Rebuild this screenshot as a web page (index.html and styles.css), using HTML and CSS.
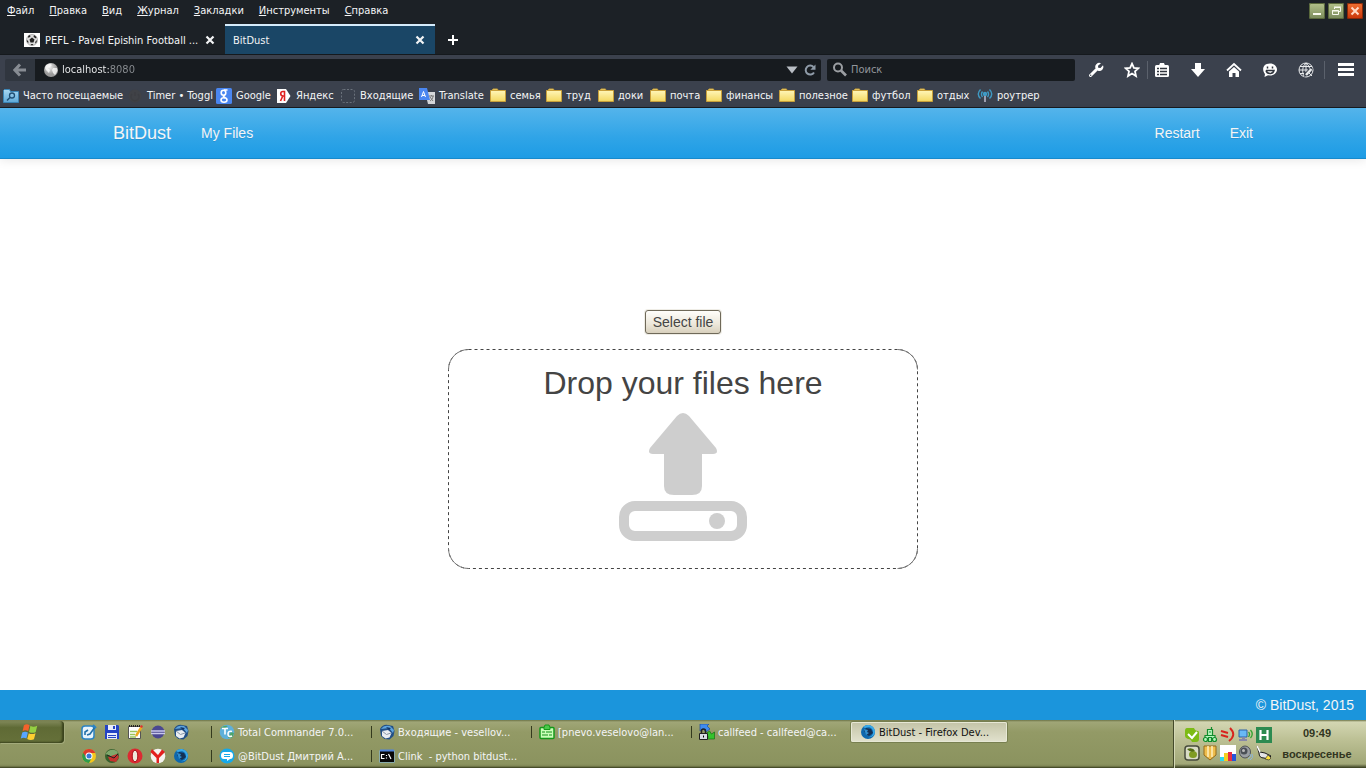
FILE: index.html
```html
<!DOCTYPE html>
<html lang="ru">
<head>
<meta charset="utf-8">
<title>BitDust</title>
<link rel="stylesheet" href="styles.css">
</head>
<body>
<svg class="defs" aria-hidden="true">
  <defs>
    <linearGradient id="g-folder" x2="0" y2="1"><stop offset="0" stop-color="#fff6b8"/><stop offset="1" stop-color="#f3d860"/></linearGradient>
    <linearGradient id="g-blue" x2="0" y2="1"><stop offset="0" stop-color="#a9d8f3"/><stop offset="1" stop-color="#5ea9d8"/></linearGradient>
    <radialGradient id="g-globe" cx=".4" cy=".3"><stop offset="0" stop-color="#eee"/><stop offset="1" stop-color="#999"/></radialGradient>
    <symbol id="folder" viewBox="0 0 16 16"><path d="M1 4V2.500h1L3 1h4.500l.5 1.500V4z" fill="#f6dc7a" stroke="#c9a03a"/><path d="M.5 2.500h15v11H.5z" fill="url(#g-folder)" stroke="#c9a03a"/></symbol>
    <symbol id="close" viewBox="0 0 10 10"><path d="M1.500 1.500l7 7M8.500 1.500l-7 7" stroke="#f2f4f5" stroke-width="2.200"/></symbol>
    <symbol id="thunderbird" viewBox="0 0 16 16"><path d="M1 5Q4 0 9 1l5 1 1.500 5-1 5-4 3.500-5-.5-3.500-3z" fill="#214f86"/><path d="M2 5Q5 .5 11 2l4 4-1 3-4-5z" fill="#5fa4dc"/><path d="M3 7l6-1 3.500 3-2 4.500-4 1L3 12z" fill="#e9eef2"/><path d="M3 7l4.500 3.500L12 9" fill="none" stroke="#8a98a8"/><path d="M7 3l5 1-2 2z" fill="#123466"/></symbol>
    <symbol id="firefox" viewBox="0 0 16 16"><circle cx="8" cy="8" r="7" fill="#0d67ad"/><path d="M3 3l2 1c4-2 8 0 8 4s-3 5-5 5c4 1 7-2 7-6C14 1 7-1 3 3z" fill="#3aa9e8"/><path d="M6 4l5 1 2 4-4 3-3-2-2-3z" fill="#143155"/><path d="M4 5l4 1-1 2 2 1-3 2z" fill="#2f8fd0"/></symbol>
    <symbol id="putty" viewBox="0 0 16 16"><path d="M1 0h9L8 2l3 3-4 3-3-3-3 2z" fill="#3f8cf0" stroke="#1d4c9c" stroke-width=".7"/><path d="M15.500 15h-8l2-2-3-3 4-3 2 3 3-2z" fill="#35c32d" stroke="#167012" stroke-width=".7"/><path d="M2.500 10V7a2 2 0 014 0v3" fill="none" stroke="#222" stroke-width="1.500"/><path d="M.5 9.500h8v6h-8z" fill="#d8dce4" stroke="#222"/><path d="M4 11.500h1v2H4z"/></symbol>
  </defs>
</svg>

<header class="browser">
  <div class="menubar">
    <nav class="menus" aria-label="Меню">
      <button type="button"><u>Ф</u>айл</button>
      <button type="button"><u>П</u>равка</button>
      <button type="button"><u>В</u>ид</button>
      <button type="button"><u>Ж</u>урнал</button>
      <button type="button"><u>З</u>акладки</button>
      <button type="button"><u>И</u>нструменты</button>
      <button type="button"><u>С</u>правка</button>
    </nav>
    <div class="winctl">
      <button type="button" class="win" aria-label="Свернуть"><svg viewBox="0 0 16 16"><path d="M4 11h8" stroke="#f8faee" stroke-width="2"/></svg></button>
      <button type="button" class="win" aria-label="Восстановить"><svg viewBox="0 0 16 16" fill="none" stroke="#f8faee"><path d="M6.500 6V4.500h6v4H11M6 4h7M4.500 7.500h6v4h-6zM4 8h7"/></svg></button>
      <button type="button" class="win win-close" aria-label="Закрыть"><svg viewBox="0 0 16 16"><path d="M4.500 4.500l7 7M11.500 4.500l-7 7" stroke="#ffd9c4" stroke-width="2"/></svg></button>
    </div>
  </div>

  <div class="tabs">
    <div class="tab">
      <svg class="i16" viewBox="0 0 16 16"><path d="M0 1h16v14H0z" fill="#fff"/><circle cx="8" cy="8" r="5.500" fill="#ddd" stroke="#888" stroke-width=".6"/><path d="M8 5.500l2.500 2-1 3h-3l-1-3zM4 4l2-1 .5 1.500L4.500 6zM10 3l2.500 2-.5 1.500L9.500 5zM2.800 8l1.400 1 .3 2L3 10zM13 8l-1.500 1.500-.5 2 1.500-1zM6.500 12h3L8 13.500z" fill="#222"/></svg>
      <span class="tab-title">PEFL - Pavel Epishin Football ...</span>
      <button type="button" aria-label="Закрыть вкладку"><svg><use href="#close"/></svg></button>
    </div>
    <div class="tab tab-on">
      <span class="tab-title">BitDust</span>
      <button type="button" aria-label="Закрыть вкладку"><svg><use href="#close"/></svg></button>
    </div>
    <button type="button" class="newtab" aria-label="Новая вкладка"><svg viewBox="0 0 12 12"><path d="M6 1v10M1 6h10" stroke="#fff" stroke-width="2"/></svg></button>
  </div>

  <div class="toolbar">
    <button type="button" class="back" aria-label="Назад"><svg viewBox="0 0 14 14"><path d="M7 1.500L1.800 7 7 12.500M2 7h11" fill="none" stroke="#878c93" stroke-width="3"/></svg></button>
    <div class="urlbar">
      <svg class="i16" viewBox="0 0 16 16"><circle cx="8" cy="8" r="7" fill="url(#g-globe)"/><path d="M3 3l4-1.500L9 3 7 5 5 6l2 2-1 3-3-3-1-2zM10 6l4 0 .5 3-2.500 4-2-2-1-3z" fill="#fff" opacity=".75"/></svg>
      <input class="url" aria-label="Адрес" value="localhost:8080">
      <button type="button" class="bare" aria-label="История"><svg class="drop-arrow" viewBox="0 0 12 8"><path d="M.5.500h11L6 7.500z" fill="#b9bec4"/></svg></button>
      <button type="button" class="bare" aria-label="Обновить"><svg class="reload" viewBox="0 0 12 12"><path d="M9.500 3A4.500 4.500 0 1 0 10 8.500" fill="none" stroke="#8f9ba8" stroke-width="2"/><path d="M11.500.5v5.200H6.300z" fill="#8f9ba8"/></svg></button>
    </div>
    <div class="searchbar">
      <svg class="i16" viewBox="0 0 16 16" fill="none" stroke="#9b9ea2"><circle cx="6" cy="5.500" r="4" stroke-width="2"/><path d="M9 8.500l5 5" stroke-width="2.600"/></svg>
      <input type="search" aria-label="Поиск" placeholder="Поиск">
    </div>
    <div class="tools">
      <button type="button" aria-label="Разработка" class="t-wrench"><svg viewBox="0 0 16 16"><path d="M2.500 13.500l6-6" stroke="#fff" stroke-width="3" stroke-linecap="round"/><path d="M13 1.300a4 4 0 00-5.500 5L10 8.700a4 4 0 005-5.400L12.500 6l-2.300-.2L10 3.700z" fill="#fff"/><circle cx="2.700" cy="13.300" r=".7" fill="#3b414c"/></svg></button>
      <button type="button" aria-label="В закладки" class="t-star"><svg viewBox="0 0 16 16"><path d="M8 1.700l1.900 4.200 4.500.4L11 9.400l1 4.700-4-2.500-4 2.500 1-4.700L1.600 6.300l4.500-.4z" fill="none" stroke="#fff" stroke-width="1.800"/></svg></button>
      <button type="button" aria-label="Библиотека" class="t-lib"><svg viewBox="0 0 16 16"><rect x="1" y="3" width="14" height="12" rx="1.500" fill="#fff"/><path d="M5 3.500L6 1h4l1 2.500z" fill="#fff"/><path d="M3 6.500h2M6 6.500h7M3 9.500h2M6 9.500h7M3 12.500h2M6 12.500h7" stroke="#30353e" stroke-width="1.300"/></svg></button>
      <button type="button" aria-label="Загрузки"><svg viewBox="0 0 16 16"><path d="M5 1h6v6h4l-7 8-7-8h4z" fill="#fff"/></svg></button>
      <button type="button" aria-label="Домой"><svg viewBox="0 0 16 16"><path d="M1 8.500L8 2l7 6.500" fill="none" stroke="#fff" stroke-width="1.800"/><path d="M3 9.500L8 5l5 4.500V15H9.500v-4h-3v4H3z" fill="#fff"/></svg></button>
      <button type="button" aria-label="Чат"><svg viewBox="0 0 16 16"><path d="M8 1.500c4 0 7 2.700 7 6s-3 6-7 6l-2-.2L2.500 15l.5-3C0 9 0 1.500 8 1.500z" fill="#fff"/><path d="M4 8.500h8c-1 4-7 4-8 0M5.500 4.500v2M10.500 4.500v2" fill="none" stroke="#30353e" stroke-width="1.500"/></svg></button>
      <button type="button" aria-label="Дополнение"><svg viewBox="0 0 16 16" fill="none" stroke="#e8eaec"><circle cx="8" cy="8" r="7"/><path d="M8 1v9M1 8h9M2 4.500h12M2 11.500h4M8 1C4 4 4 11 6 14M8 1c3 2 4 5 3.500 8"/><path d="M6 15l2-5 5-5 2 2-5 6z" fill="#3b414c" stroke="none"/><path d="M8 13l5.500-6" stroke-width="2.500"/><path d="M11 11l3 3"/></svg></button>
      <button type="button" aria-label="Меню" class="t-menu"><svg viewBox="0 0 16 16"><path d="M0 2.500h16M0 7.500h16M0 12.500h16" stroke="#fff" stroke-width="3"/></svg></button>
    </div>
  </div>

  <nav class="bookmarks" aria-label="Закладки">
    <a href="#" class="bm-often"><svg class="i16" viewBox="0 0 16 16"><path d="M.5 14.500v-12l1-1h5l1 2h8v11z" fill="url(#g-blue)" stroke="#3b86b8"/><circle cx="9" cy="7.500" r="2.500" fill="none" stroke="#1f4e74" stroke-width="1.300"/><path d="M7 9.500l-3 3" stroke="#1f4e74" stroke-width="1.500"/></svg>Часто посещаемые</a>
    <a href="#" class="bm-toggl"><svg class="i16" viewBox="0 0 16 16"><circle cx="8" cy="8" r="6.500" fill="#404247"/><path d="M5 6a4 4 0 106 0M8 4v4" fill="none" stroke="#3c3e43" stroke-width="1.500"/></svg>Timer • Toggl</a>
    <a href="#" class="bm-google"><svg class="i16" viewBox="0 0 16 16"><rect width="16" height="16" rx="1.500" fill="#4a86f0"/><g fill="none" stroke="#fff" stroke-width="1.600"><ellipse cx="7.500" cy="4.800" rx="2.300" ry="2.500"/><ellipse cx="8" cy="12" rx="3" ry="2.200"/><path d="M8 2h3.500M9 7c-3 1-1 2 .5 3"/></g></svg>Google</a>
    <a href="#" class="bm-yandex"><svg class="i16" viewBox="0 0 16 16"><path d="M1 1h9l4.500 7L10 15H1z" fill="#fff"/><path d="M8.500 13V3.500H7C4 3.500 4 8 7 8h1.500M6.800 8L4.500 13" fill="none" stroke="#e02020" stroke-width="1.600"/></svg>Яндекс</a>
    <a href="#" class="bm-inbox"><svg class="i16" viewBox="0 0 16 16"><rect x="1.500" y="1.500" width="13" height="13" rx="2" fill="none" stroke="#6b727c" stroke-dasharray="2 1.500"/></svg>Входящие</a>
    <a href="#" class="bm-tr"><svg class="i16" viewBox="0 0 16 16"><path d="M6 4h10v12H9z" fill="#d5d7da"/><path d="M0 0h8l3 12H0z" fill="#4a86f0"/><path d="M2.500 9L4.500 3.500 6.500 9M3 7.500h3" fill="none" stroke="#fff"/><path d="M10 8h5M12.500 7v1M14 8c0 3-2 4-3 5M11 9l3 4" fill="none" stroke="#777"/></svg>Translate</a>
    <a href="#" class="bm-w1"><svg class="i16"><use href="#folder"/></svg>семья</a>
    <a href="#" class="bm-w2"><svg class="i16"><use href="#folder"/></svg>труд</a>
    <a href="#" class="bm-w2"><svg class="i16"><use href="#folder"/></svg>доки</a>
    <a href="#" class="bm-w1"><svg class="i16"><use href="#folder"/></svg>почта</a>
    <a href="#" class="bm-w3"><svg class="i16"><use href="#folder"/></svg>финансы</a>
    <a href="#" class="bm-w3"><svg class="i16"><use href="#folder"/></svg>полезное</a>
    <a href="#" class="bm-w4"><svg class="i16"><use href="#folder"/></svg>футбол</a>
    <a href="#" class="bm-w5"><svg class="i16"><use href="#folder"/></svg>отдых</a>
    <a href="#"><svg class="i16" viewBox="0 0 16 16" fill="none" stroke="#3f9ac4" stroke-width="1.400"><path d="M3.500 1.500c-3 3-3 6 0 9M12.500 1.500c3 3 3 6 0 9M5.500 3.500c-1.500 2-1.500 3.500 0 5.500M10.500 3.500c1.500 2 1.500 3.500 0 5.500"/><circle cx="8" cy="6" r="1.500" fill="#3f9ac4"/><path d="M8 8v6" stroke="#aab" stroke-width="1.800"/></svg>роутрер</a>
  </nav>
</header>

<div class="page">
  <nav class="navbar">
    <div class="container">
      <a class="brand" href="#">BitDust</a>
      <a href="#">My Files</a>
      <a class="push" href="#">Restart</a>
      <a href="#">Exit</a>
    </div>
  </nav>
  <main class="content">
    <button type="button" class="select-file">Select file</button>
    <section class="dropzone">
      <svg class="frame" aria-hidden="true">
        <rect class="frame-line" x="0.500" y="0.500" rx="20"/>
        <g class="frame-corners">
          <path d="M.5 20.500a20 20 0 0120-20"/>
          <svg x="100%" overflow="visible"><path d="M-20.500.500a20 20 0 0120 20"/></svg>
          <svg y="100%" overflow="visible"><path d="M.5-20.500a20 20 0 0020 20"/></svg>
          <svg x="100%" y="100%" overflow="visible"><path d="M-.5-20.500a20 20 0 01-20 20"/></svg>
        </g>
      </svg>
      <h1>Drop your files here</h1>
      <svg class="upload" viewBox="0 0 128 128" fill="#cecece"><path d="M58 3q6-6 12 0l27 32q3 6-3 6H83v32q0 9-10 9H55q-10 0-10-9V41H34q-6 0-3-6z"/><rect x="5" y="93" width="118" height="30" rx="11" fill="none" stroke="#cecece" stroke-width="10"/><circle cx="98" cy="108" r="8"/></svg>
    </section>
  </main>
  <footer class="footer">© BitDust, 2015</footer>
</div>

<div class="taskbar">
  <button type="button" class="start" aria-label="Пуск"><svg viewBox="0 0 16 16"><path d="M3.500 2q2.500-2 5 0L7.300 7.300q-2.500-1.500-5 0z" fill="#f4622c"/><path d="M9.300 2.500q2.500 1.500 6 0L14 8q-2.500 1.500-6 0z" fill="#95d042"/><path d="M2 8.500q2.500-1.500 5 0l-1.300 5.300q-2.500-1.500-5 0z" fill="#58a6ff"/><path d="M7.800 9q2.500 1.500 6 0l-1.400 5.500q-3 1.500-6-.2z" fill="#ffcf30"/></svg></button>
  <div class="quick">
    <button type="button" aria-label="Рабочий стол"><svg viewBox="0 0 16 16"><rect x="1" y="2" width="12" height="13" rx="3" fill="#e8f3fb" stroke="#2b83c4" stroke-width="1.500"/><path d="M4 11V8l3-2M6 11l3-1 5-7" fill="none" stroke="#236fa8" stroke-width="1.600"/><path d="M12 1l3 3" stroke="#2b83c4" stroke-width="2"/></svg></button>
    <button type="button" aria-label="Сохранить"><svg viewBox="0 0 16 16"><path d="M1 1h13l1 1v13H1z" fill="#2444c4"/><path d="M4 1h8v5H4zM3 9h10v6H3z" fill="#e8ecf8"/><path d="M9 2h2v3H9zM4 11h8v1H4zM4 13h8v1H4z" fill="#2444c4"/></svg></button>
    <button type="button" aria-label="Блокнот"><svg viewBox="0 0 16 16"><path d="M1.500 2.500h12v12h-12z" fill="#fff" stroke="#555"/><path d="M3 7.500h7M3 10.500h5M3 13h6" stroke="#9bc45a" stroke-width="1.500"/><path d="M2 2h11" stroke="#222" stroke-dasharray="1 1" stroke-width="2"/><path d="M14.500 3L9 12" stroke="#edaa20" stroke-width="2.500"/><path d="M14 1l2 1-1 2-2-1z" fill="#d33"/></svg></button>
    <button type="button" aria-label="Eclipse"><svg viewBox="0 0 16 16"><circle cx="8" cy="8" r="6.500" fill="#4b4890"/><path d="M1 7h14M1 9.500h14" stroke="#c9c8ec" stroke-width="1.300"/></svg></button>
    <button type="button" aria-label="Thunderbird"><svg><use href="#thunderbird"/></svg></button>
    <button type="button" aria-label="Chrome"><svg viewBox="0 0 16 16"><circle cx="8" cy="8" r="7" fill="#f4c71c"/><path d="M2 4.500A7 7 0 008 15l3-5.500z" fill="#2f9b4c"/><path d="M2 4.500A7 7 0 0114.300 5H8L5 9z" fill="#dc3b2d"/><circle cx="8" cy="8" r="3.500" fill="#fff"/><circle cx="8" cy="8" r="2.500" fill="#3b78d8"/></svg></button>
    <button type="button" aria-label="Почта"><svg viewBox="0 0 16 16"><circle cx="8" cy="8" r="7" fill="#35602c"/><path d="M1.500 6C4 1 12 0 14 5l-5 4z" fill="#7fa86c"/><path d="M4 9l9-3 2 3-3 5-6-1z" fill="#c4332e"/><path d="M3 7l7 3 4-4" fill="none" stroke="#222"/></svg></button>
    <button type="button" aria-label="Opera"><svg viewBox="0 0 16 16"><ellipse cx="8" cy="8" rx="7.500" ry="7.500" fill="#dc2b32"/><ellipse cx="8" cy="8" rx="2.800" ry="5.800" fill="#efe9dc" stroke="#a80d17"/></svg></button>
    <button type="button" aria-label="Яндекс"><svg viewBox="0 0 16 16"><circle cx="8" cy="8" r="7.300" fill="#f5f3f0"/><path d="M2 1l6 6 4-5.500L15 4l-6 6v5H6.500v-5L.500 4z" fill="#e3201f"/></svg></button>
    <button type="button" aria-label="Firefox"><svg><use href="#firefox"/></svg></button>
  </div>
  <div class="tasks">
    <button type="button" class="task"><svg viewBox="0 0 16 16"><circle cx="8" cy="8" r="7.300" fill="#5fb0da"/><path d="M9 14l3-6 3 1-2 5zM2 4q3-3 7-2L6 4z" fill="#4da46b"/><path d="M3 4.500h6M6 4.500v6M13 7.500q-4-1-4 2.500t4 2" fill="none" stroke="#fff" stroke-width="1.600"/></svg><span>Total Commander 7.0...</span></button>
    <button type="button" class="task"><svg><use href="#thunderbird"/></svg><span>Входящие - vesellov...</span></button>
    <button type="button" class="task"><svg viewBox="0 0 16 16"><rect x="1" y="3.500" width="14" height="11" rx="1" fill="#caffb8" stroke="#14991a" stroke-width="1.500"/><path d="M5 3.500L6 1h4l1 2.500v2H5z" fill="#4cc94a" stroke="#14991a"/><path d="M3 8h3M7 8h6M3 11h6M10 11h3" stroke="#129018" stroke-width="1.200"/></svg><span>[pnevo.veselovo@lan...</span></button>
    <button type="button" class="task"><svg><use href="#putty"/></svg><span>callfeed - callfeed@ca...</span></button>
    <button type="button" class="task task-on"><svg><use href="#firefox"/></svg><span>BitDust - Firefox Dev...</span></button>
    <button type="button" class="task row2"><svg viewBox="0 0 16 16"><circle cx="8" cy="8" r="7.500" fill="#16a9ea"/><path d="M5 4h6q3 0 3 3.500T11 11l-3 2v-2H5Q2 11 2 7.500T5 4z" fill="#fff"/><path d="M5 6.500h6M5 8.500h6" stroke="#16a9ea"/></svg><span>@BitDust Дмитрий А...</span></button>
    <button type="button" class="task"><svg viewBox="0 0 16 16"><path d="M.5 2.500h15v12H.5z" fill="#080808" stroke="#8aa"/><path d="M1 1.500h14v2H1z" fill="#4e83d8"/><path d="M5.500 6.500h-3v4h3M7.500 7v1M7.500 9.500v1M9.500 6l2.500 5" fill="none" stroke="#fff" stroke-width="1.200"/></svg><span>Clink &nbsp;- python bitdust...</span></button>
  </div>
  <div class="tray">
    <div class="tray-icons">
      <svg viewBox="0 0 16 16"><path d="M3 1h7q1 3 4 3 1 0 1 2v6q0 3-3 3H8q-1-3-4-3Q1 11 1 9V4q0-3 2-3z" fill="#7dbb16"/><path d="M4 7l4 4 5-6" fill="none" stroke="#fff" stroke-width="2"/></svg>
      <svg viewBox="0 0 16 16" fill="#b8f5be" stroke="#128c2c" stroke-width="1.200"><path d="M9.500 0v2M5.500 2.500h5v6h-5zM3 8.500h10v3H3z"/><circle cx="3.500" cy="12.500" r="2"/><circle cx="12.500" cy="12.500" r="2"/><path d="M6.500 10.500h3v4h-3zM7 5h2"/></svg>
      <svg viewBox="0 0 16 16" fill="none" stroke="#d8241d" stroke-width="2"><path d="M1 4l7 2M1 8l7 2M10 1q7 7-1 13"/></svg>
      <svg viewBox="0 0 16 16"><path d="M1 3h8v7H1z" fill="#69b9f5" stroke="#2c62a8"/><path d="M4 10h3v2h2v2H1v-2h3z" fill="#88a"/><path d="M10.500 5q2 2 0 5M12.500 3q3.500 4 0 8" fill="none" stroke="#31a330" stroke-width="1.300"/></svg>
      <svg viewBox="0 0 16 16"><path d="M0 0h16v16H0z" fill="#2c8a50"/><path d="M4.500 3v10M11.500 3v10M5 8h6" stroke="#fff" stroke-width="2.200"/></svg>
      <svg viewBox="0 0 16 16"><rect x="1" y="1" width="14" height="14" rx="3" fill="#d9dcc5" stroke="#474b3c" stroke-width="1.500"/><ellipse cx="9" cy="9.500" rx="4" ry="3.500" fill="#809c22"/><path d="M3 4q6-2 8 2-5 2-8-2" fill="#526c14"/></svg>
      <svg viewBox="0 0 16 16"><path d="M2 1h12v9l-6 5-6-5z" fill="#efbd4c" stroke="#946a1b"/><path d="M6 1v11M10 1v11" stroke="#fff0bd" stroke-width="1.500"/></svg>
      <svg viewBox="0 0 16 16"><path d="M0 0h16v16H0z" fill="#fff"/><path d="M0 12h4v4H0z" fill="#2cd8ef"/><path d="M4 8h4v8H4z" fill="#f4cf21"/><path d="M8 7h4v9H8z" fill="#e72f43"/><path d="M12 9h4v7h-4z" fill="#2854d8"/></svg>
      <svg viewBox="0 0 16 16"><ellipse cx="7" cy="7" rx="5.500" ry="6" fill="#9b9fa3" stroke="#505458"/><circle cx="6" cy="6" r="3.500" fill="#4b5056"/><circle cx="5.500" cy="5.500" r="1.500" fill="#bbb"/><path d="M12 9q2 3-2 5M14 9q2 4-2 6" fill="none" stroke="#8db4dc"/></svg>
      <svg viewBox="0 0 16 16"><path d="M1 1l2 7q0 5 5 5l4 1 3-3-6-3-5-1z" fill="#e4e4e4" stroke="#181818"/><path d="M1 1l3 6" stroke="#fff" stroke-width="1.500"/><path d="M12 10l3 3-2 2-4-1z" fill="#ffe33d" stroke="#222" stroke-width=".6"/></svg>
    </div>
    <div class="clock"><time>09:49</time><span>воскресенье</span></div>
  </div>
</div>
</body>
</html>
```
FILE: styles.css
```css
* { box-sizing: border-box; }

body {
  margin: 0;
  min-height: 100vh;
  display: flex;
  flex-direction: column;
  font: 11px/16px "Tahoma", "DejaVu Sans Condensed", "Noto Sans", sans-serif;
  color: #f4f5f6;
  background: #fff;
}

button, input { font: inherit; color: inherit; }
button { margin: 0; padding: 0; border: 0; background: none; }
a { color: inherit; text-decoration: none; }
svg { display: block; flex: none; }
.defs { width: 0; height: 0; position: absolute; }
.i16 { width: 16px; height: 16px; }

/* Browser window */
.browser { background: #1c2126; }

.menubar { display: flex; justify-content: space-between; height: 24px; padding: 2px 3px 0 7px; }
.menus { display: flex; align-items: flex-start; gap: 15px; }
.menus button { line-height: 18px; white-space: nowrap; }
.winctl { display: flex; gap: 3px; padding-top: 1px; }
.win { width: 16px; height: 16px; border-radius: 2px; background: linear-gradient(#b4c28b, #78895a); box-shadow: inset 0 0 0 1px #59683b; }
.win svg { width: 16px; height: 16px; }
.win-close { background: linear-gradient(#ef7133, #c93407); box-shadow: inset 0 0 0 1px #8a2807; }

.tabs { display: flex; height: 31px; padding-left: 16px; border-bottom: 1px solid #15191d; }
.tab { display: flex; align-items: center; gap: 5px; flex: 0 0 209px; min-width: 0; padding: 2px 10px 0 8px; }
.tab-on { flex-basis: 210px; border-top: 2px solid #d5ecfb; background: #1a4666; padding-top: 0; }
.tab-title { flex: 1; min-width: 0; line-height: 18px; padding-top: 2px; white-space: nowrap; overflow: hidden; }
.tab svg:not(.i16) { width: 10px; height: 10px; }
.newtab { width: 36px; display: grid; place-items: center; padding-top: 2px; }
.newtab svg { width: 12px; height: 12px; }

.toolbar { display: flex; align-items: center; height: 29px; padding: 0 5px; background: #3b414d; }
.back { width: 30px; height: 22px; display: grid; place-items: center; background: #30363f; border-radius: 2px 0 0 2px; }
.back svg { width: 14px; height: 14px; }
.urlbar, .searchbar { display: flex; align-items: center; height: 22px; background: #171b1f; border-radius: 0 2px 2px 0; }
.urlbar { flex: 1; gap: 6px; padding: 0 5px 0 8px; margin-right: 6px; }
.urlbar input, .searchbar input { flex: 1; min-width: 0; padding: 0; border: 0; outline: 0; background: none; appearance: none; }
.urlbar .url {
  margin-left: -3px;
  color: transparent;
  background: linear-gradient(to right, #f4f5f6 47px, #8b8f93 47px);
  background-clip: text;
}
.drop-arrow { width: 12px; height: 8px; }
.reload { width: 12px; height: 12px; }
.searchbar { flex: 0 0 248px; gap: 3px; padding: 0 5px; border-radius: 2px; }
.searchbar input::placeholder { color: #92969b; opacity: 1; }
.tools { display: flex; align-items: center; gap: 20px; padding: 0 7px 0 13px; }
.tools button { width: 16px; height: 22px; display: grid; place-items: center; }
.tools svg { width: 16px; height: 16px; }
.t-lib { margin-left: -6px; }
.t-lib, .t-menu { position: relative; }
.t-menu { margin-left: 4px; }
.t-lib::before, .t-menu::before { content: ""; position: absolute; left: -7px; top: 2px; width: 1px; height: 18px; background: #5b616c; }
.t-menu::before { left: -14px; }

.bookmarks { display: flex; height: 24px; padding-left: 3px; line-height: 18px; background: #3b414d; border-bottom: 1px solid #171b20; }
.bookmarks a { display: flex; align-items: center; gap: 4px; white-space: nowrap; flex: none; padding-top: 1px; }
.bm-often { width: 124px; }
.bm-toggl { width: 89px; }
.bm-google { width: 60px; }
.bm-yandex { width: 64px; }
.bm-inbox { width: 79px; }
.bm-tr { width: 71px; }
.bm-w1 { width: 56px; }
.bm-w2 { width: 52px; }
.bm-w3 { width: 73px; }
.bm-w4 { width: 65px; }
.bm-w5 { width: 60px; }

/* Web page */
.page {
  flex: 1;
  display: flex;
  flex-direction: column;
  font: 14px/20px "Liberation Sans", Arial, sans-serif;
}
.navbar { background: linear-gradient(#54b4eb, #2fa4e7 60%, #1d9ce5); border-bottom: 1px solid #178acc; box-shadow: 0 1px 10px rgba(0, 0, 0, .1); }
.container { max-width: 1170px; margin: 0 auto; display: flex; align-items: center; min-height: 50px; text-shadow: 0 1px 0 rgba(0, 0, 0, .1); }
.container a { padding: 15px; }
.brand { font-size: 18px; }
.container .push { margin-left: auto; }
.content { flex: 1; display: flex; flex-direction: column; align-items: center; justify-content: center; gap: 15px; padding: 30px 16px 0; color: #444; }
.select-file { height: 24px; padding: 0 7px; border: 1px solid #6f6959; border-radius: 3px; background: linear-gradient(#fffefb, #ece7da 60%, #d8d0bd); box-shadow: 0 0 0 1px #efede6; }
.dropzone { position: relative; width: 100%; max-width: 470px; padding: 14px 0 28px; display: flex; flex-direction: column; align-items: center; gap: 10px; }
.frame { position: absolute; inset: 0; width: 100%; height: 100%; fill: none; stroke: #444; }
.frame-line { width: calc(100% - 1px); height: calc(100% - 1px); stroke-dasharray: 3 3; }
.frame-corners { stroke: #777; }
.dropzone h1 { margin: 0; font-size: 32px; line-height: 40px; font-weight: 400; }
.upload { width: 128px; height: 128px; }
.footer { background: #1b95dc; padding: 5px 12px; text-align: right; }

/* Taskbar */
.taskbar { display: flex; height: 48px; background: linear-gradient(#6d7448, #a0a677 2px, #939a66 12px, #8b935f 44px, #7f8654 46px, #343a1c); }
.start { width: 64px; height: 22px; margin-top: 1px; padding-right: 6px; display: grid; place-items: center; border-radius: 0 4px 4px 0; background: linear-gradient(#81895a, #5f6a35 30%, #66713a); box-shadow: inset -2px -1px 2px #39421c, 1px 1px 0 #a3aa7b; }
.start svg { width: 18px; height: 18px; }
.quick { display: grid; grid-template-columns: repeat(5, 16px); grid-auto-rows: 24px; column-gap: 7px; padding: 0 22px 0 17px; align-content: start; }
.quick button { display: grid; place-items: center; }
.quick svg { width: 16px; height: 16px; }
.tasks { flex: 1; display: grid; grid-template-columns: repeat(6, 1fr); grid-auto-rows: 24px; align-content: start; min-width: 0; padding-right: 2px; }
.task { position: relative; display: flex; align-items: center; gap: 3px; padding-left: 8px; white-space: nowrap; text-align: left; min-width: 0; }
.task span { padding-top: 2px; }
.task svg { width: 16px; height: 16px; }
.task::before { content: ""; position: absolute; left: 0; top: 6px; width: 1px; height: 12px; background: #343a1e; }
.row2 { grid-column-start: 1; }
.task-on { margin: 2px 4px 2px 0; padding-left: 9px; color: #111; border-radius: 2px; background: linear-gradient(#c3c3a6, #e2e2ce); box-shadow: inset 0 0 0 1px #e7e8d5, 0 0 0 1px #777f50; }
.task-on::before { display: none; }
.tray { flex: 0 0 193px; display: flex; padding-left: 10px; border-left: 1px solid #454b2b; background: linear-gradient(#6d7448, #d3d6b2 2px, #bcc094 20px, #a1a777 44px, #343a1c); box-shadow: inset 1px 0 0 #d4d8b5; }
.tray-icons { display: grid; grid-template-columns: repeat(5, 16px); grid-auto-rows: 16px; gap: 2px; padding-top: 7px; align-content: start; }
.tray-icons svg { width: 16px; height: 16px; }
.clock { flex: 1; padding: 5px 4px 0 0; display: flex; flex-direction: column; align-items: center; gap: 5px; color: #32361f; font: bold 11px/16px "Liberation Sans", Arial, sans-serif; }
```
